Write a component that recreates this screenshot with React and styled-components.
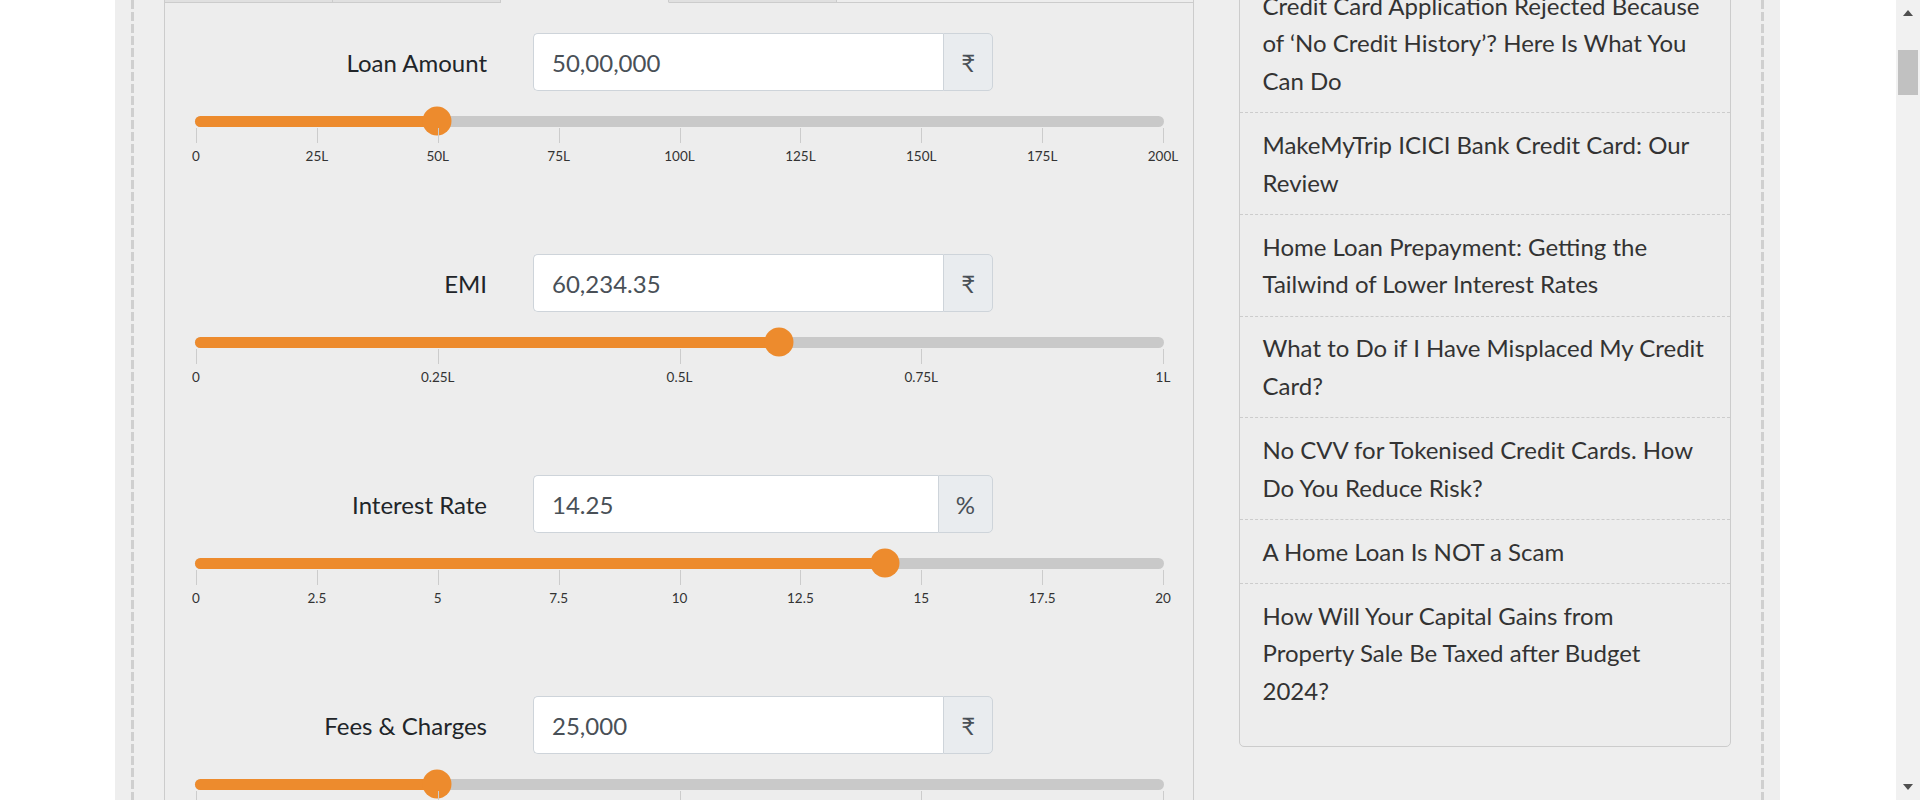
import React from 'react';
import styled, { createGlobalStyle } from 'styled-components';

const GlobalStyle = createGlobalStyle`
  html, body { margin: 0; padding: 0; height: 800px; overflow: hidden; background: #ffffff; }
  body { font-family: Lato, "Noto Sans", sans-serif; }
  #root { height: 800px; }
  * { box-sizing: border-box; }
`;

const ORANGE = '#ed8b2d';
const DASH = 'repeating-linear-gradient(to bottom, #cfcfcf 0 9px, transparent 9px 12px)';

const Page = styled.div`
  display: flex;
  height: 800px;
  overflow: hidden;
`;

const Gutter = styled.div`
  width: 115px;
  flex: none;
`;

const Container = styled.div`
  width: 1665px;
  flex: none;
  background: #eeeeee;
  padding: 0 16px;
  display: flex;
`;

const Framed = styled.div`
  flex: 1;
  background-image: ${DASH}, ${DASH};
  background-size: 3px 100%, 3px 100%;
  background-position: left top, right top;
  background-repeat: no-repeat;
  padding: 0 33px;
  display: flex;
  gap: 45px;
  align-items: flex-start;
  overflow: hidden;
`;

const Whitespace = styled.div`
  flex: 1;
`;

const Scrollbar = styled.div`
  width: 24px;
  flex: none;
  background: #f1f1f1;
  display: flex;
  flex-direction: column;
  align-items: center;
`;

const ArrowBtn = styled.div`
  height: 26px;
  width: 100%;
  display: flex;
  align-items: center;
  justify-content: center;
  &::before {
    content: '';
    width: 0;
    height: 0;
    border-left: 5px solid transparent;
    border-right: 5px solid transparent;
    ${(p) => (p.$down ? 'border-top: 6px solid #505050;' : 'border-bottom: 6px solid #505050;')}
  }
`;

const ScrollThumb = styled.div`
  margin-top: 24px;
  width: 20px;
  height: 45px;
  background: #c1c1c1;
`;

const ScrollSpacer = styled.div`
  flex: 1;
`;

/* calculator panel */
const Panel = styled.div`
  width: 1030px;
  flex: none;
  align-self: stretch;
  background: #ededed;
  border-left: 1px solid #cccccc;
  border-right: 1px solid #cccccc;
`;

const TabStrip = styled.div`
  display: flex;
  height: 3px;
`;

const Tab = styled.div`
  width: 168px;
  height: 3px;
  background: ${(p) => (p.$active ? '#ededed' : '#e0e0e0')};
  border-right: 1px solid #cccccc;
  border-bottom: 1px solid ${(p) => (p.$active ? 'transparent' : '#cccccc')};
`;

const TabFiller = styled.div`
  flex: 1;
  height: 3px;
  border-bottom: 1px solid #cccccc;
`;

const PanelBody = styled.div`
  padding-top: 30.3px;
`;

const FieldBlock = styled.div`
  margin-bottom: 90.3px;
`;

const FieldRow = styled.div`
  display: grid;
  grid-template-columns: 322px 460px;
  column-gap: 46px;
  align-items: center;
`;

const Label = styled.label`
  text-align: right;
  font-size: 24px;
  color: #212529;
`;

const InputGroup = styled.div`
  display: flex;
  height: 58px;
`;

const Input = styled.input`
  flex: 1;
  min-width: 0;
  height: 100%;
  border: 1px solid #ced4da;
  border-right: none;
  border-radius: 5px 0 0 5px;
  padding: 0 18px;
  font-family: Lato, "Noto Sans", sans-serif;
  font-size: 24px;
  color: #495057;
  background: #ffffff;
  outline: none;
`;

const Addon = styled.span`
  display: flex;
  align-items: center;
  padding: 0 17px;
  border: 1px solid #ced4da;
  border-radius: 0 5px 5px 0;
  background: #e9ecef;
  font-size: 24px;
  color: #495057;
`;

const SliderArea = styled.div`
  margin: 24.7px 30px 0 31px;
`;

const Track = styled.div`
  position: relative;
  height: 11px;
  margin: 0 -1px;
  border-radius: 6px;
  background: #c9c9c9;
`;

const Fill = styled.div`
  position: absolute;
  left: 0;
  top: 0;
  bottom: 0;
  border-radius: 6px;
  background: ${ORANGE};
`;

const Thumb = styled.div`
  position: absolute;
  top: 50%;
  width: 29px;
  height: 29px;
  border-radius: 50%;
  background: ${ORANGE};
  transform: translate(-50%, -50%);
`;

const TickRow = styled.div`
  position: relative;
  height: 15px;
  margin-top: 1px;
`;

const Tick = styled.span`
  position: absolute;
  top: 0;
  width: 1px;
  height: 15px;
  background: #cccccc;
`;

const LabelRow = styled.div`
  position: relative;
  height: 16px;
  margin-top: 5px;
`;

const TickLabel = styled.span`
  position: absolute;
  top: 0;
  transform: translateX(-50%);
  font-size: 13.5px;
  line-height: 16px;
  color: #333333;
  white-space: nowrap;
`;

/* sidebar */
const Sidebar = styled.aside`
  width: 492px;
  flex: none;
  margin-top: -27.2px;
  background: #ededed;
  border: 1px solid #cccccc;
  border-radius: 5px;
  padding-bottom: 24px;
`;

const PostList = styled.ul`
  list-style: none;
  margin: 0;
  padding: 0;
`;

const PostItem = styled.li`
  padding: 12.7px 22.5px;
  border-bottom: 1px dashed #cccccc;
  font-size: 24px;
  line-height: 37.65px;
  color: #333333;
  &:last-child {
    border-bottom: none;
  }
`;

const fields = [
  {
    label: 'Loan Amount',
    value: '50,00,000',
    unit: '₹',
    pct: 25,
    ticks: ['0', '25L', '50L', '75L', '100L', '125L', '150L', '175L', '200L'],
  },
  {
    label: 'EMI',
    value: '60,234.35',
    unit: '₹',
    pct: 60.234,
    ticks: ['0', '0.25L', '0.5L', '0.75L', '1L'],
  },
  {
    label: 'Interest Rate',
    value: '14.25',
    unit: '%',
    pct: 71.25,
    ticks: ['0', '2.5', '5', '7.5', '10', '12.5', '15', '17.5', '20'],
  },
  {
    label: 'Fees & Charges',
    value: '25,000',
    unit: '₹',
    pct: 25,
    ticks: ['0', '0.25L', '0.5L', '0.75L', '1L'],
  },
];

const posts = [
  'Credit Card Application Rejected Because of ‘No Credit History’? Here Is What You Can Do',
  'MakeMyTrip ICICI Bank Credit Card: Our Review',
  'Home Loan Prepayment: Getting the Tailwind of Lower Interest Rates',
  'What to Do if I Have Misplaced My Credit Card?',
  'No CVV for Tokenised Credit Cards. How Do You Reduce Risk?',
  'A Home Loan Is NOT a Scam',
  'How Will Your Capital Gains from Property Sale Be Taxed after Budget 2024?',
];

function Slider({ pct, ticks }) {
  const pos = (i) => `${(i / (ticks.length - 1)) * 100}%`;
  return (
    <SliderArea>
      <Track>
        <Fill style={{ width: `${pct}%` }} />
        <Thumb style={{ left: `${pct}%` }} />
      </Track>
      <TickRow>
        {ticks.map((t, i) => (
          <Tick key={t} style={{ left: pos(i) }} />
        ))}
      </TickRow>
      <LabelRow>
        {ticks.map((t, i) => (
          <TickLabel key={t} style={{ left: pos(i) }}>
            {t}
          </TickLabel>
        ))}
      </LabelRow>
    </SliderArea>
  );
}

function Field({ label, value, unit, pct, ticks }) {
  return (
    <FieldBlock>
      <FieldRow>
        <Label>{label}</Label>
        <InputGroup>
          <Input readOnly value={value} />
          <Addon>{unit}</Addon>
        </InputGroup>
      </FieldRow>
      <Slider pct={pct} ticks={ticks} />
    </FieldBlock>
  );
}

export default function App() {
  return (
    <>
      <GlobalStyle />
      <Page>
        <Gutter />
        <Container>
          <Framed>
            <Panel>
              <TabStrip>
                <Tab />
                <Tab />
                <Tab $active />
                <Tab />
                <TabFiller />
              </TabStrip>
              <PanelBody>
                {fields.map((f) => (
                  <Field key={f.label} {...f} />
                ))}
              </PanelBody>
            </Panel>
            <Sidebar>
              <PostList>
                {posts.map((p) => (
                  <PostItem key={p}>{p}</PostItem>
                ))}
              </PostList>
            </Sidebar>
          </Framed>
        </Container>
        <Whitespace />
        <Scrollbar>
          <ArrowBtn />
          <ScrollThumb />
          <ScrollSpacer />
          <ArrowBtn $down />
        </Scrollbar>
      </Page>
    </>
  );
}
